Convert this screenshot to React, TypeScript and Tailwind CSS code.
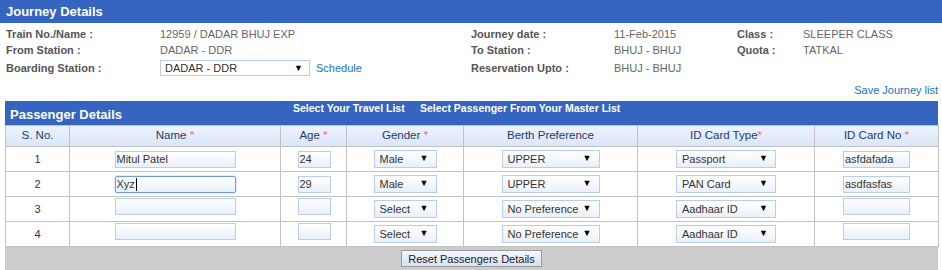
import React from "react";

const font = { fontFamily: '"Liberation Sans", Arial, sans-serif' };

function Field({ value, width, focus }: { value: string; width: string; focus?: boolean }) {
  return (
    <div
      className={`inline-flex h-[17px] items-center whitespace-nowrap ${width} bg-gradient-to-b from-white to-[#eaf0f9] px-[1px] text-left text-[11px] text-[#333] ${
        focus ? "rounded-[2px] border border-[#6f9be0] shadow-[0_0_2px_#9bbcf0]" : "border border-[#b9cdee]"
      }`}
    >
      {value}
      {focus && <span className="ml-[1px] inline-block h-[13px] w-[1px] bg-black" />}
    </div>
  );
}

function Dropdown({ value, width }: { value: string; width: string }) {
  return (
    <div
      className={`inline-flex h-[18px] items-center justify-between whitespace-nowrap ${width} border border-[#b9cdee] bg-gradient-to-b from-white to-[#eaf0f9] pl-[5px] pr-[7px] text-left text-[11px] text-[#333]`}
    >
      <span>{value}</span>
      <span className="text-[9px] text-black">▼</span>
    </div>
  );
}

type Passenger = {
  name: string;
  age: string;
  gender: string;
  berth: string;
  idType: string;
  idNo: string;
  focus?: boolean;
};

const passengers: Passenger[] = [
  { name: "Mitul Patel", age: "24", gender: "Male", berth: "UPPER", idType: "Passport", idNo: "asfdafada" },
  { name: "Xyz", age: "29", gender: "Male", berth: "UPPER", idType: "PAN Card", idNo: "asdfasfas", focus: true },
  { name: "", age: "", gender: "Select", berth: "No Preference", idType: "Aadhaar ID", idNo: "" },
  { name: "", age: "", gender: "Select", berth: "No Preference", idType: "Aadhaar ID", idNo: "" },
];

const Req = () => <span className="text-[#f06a8a]"> *</span>;

export default function App() {
  return (
    <div className="h-[270px] w-[942px] overflow-hidden bg-white" style={font}>
      {/* Journey header */}
      <div className="flex h-[23px] items-center bg-[#3565c0] pl-[6px] text-[13px] font-bold text-white">
        Journey Details
      </div>

      {/* Journey info */}
      <div className="grid grid-cols-[154px_311px_143px_123px_66px_1fr] pl-[6px] pt-[3px] text-[11px] leading-[16px]">
        <div className="font-bold text-[#555]">Train No./Name :</div>
        <div className="text-[#666]">12959 / DADAR BHUJ EXP</div>
        <div className="font-bold text-[#555]">Journey date :</div>
        <div className="text-[#666]">11-Feb-2015</div>
        <div className="font-bold text-[#555]">Class :</div>
        <div className="text-[#666]">SLEEPER CLASS</div>

        <div className="font-bold text-[#555]">From Station :</div>
        <div className="text-[#666]">DADAR - DDR</div>
        <div className="font-bold text-[#555]">To Station :</div>
        <div className="text-[#666]">BHUJ - BHUJ</div>
        <div className="font-bold text-[#555]">Quota :</div>
        <div className="text-[#666]">TATKAL</div>

        <div className="pt-[2px] font-bold text-[#555]">Boarding Station :</div>
        <div className="flex items-center gap-[6px] pt-[2px]">
          <div className="flex h-[16px] w-[150px] items-center justify-between border border-[#b9cdee] bg-white pl-[4px] pr-[6px] text-[11px] text-[#333]">
            <span>DADAR - DDR</span>
            <span className="text-[9px] text-black">▼</span>
          </div>
          <span className="text-[#1a73c8]">Schedule</span>
        </div>
        <div className="pt-[2px] font-bold text-[#555]">Reservation Upto :</div>
        <div className="pt-[2px] text-[#666]">BHUJ - BHUJ</div>
        <div />
        <div />
      </div>

      <div className="flex justify-end pr-[4px] pt-[7px] text-[11px] leading-[14px] text-[#1a73c8]">
        Save Journey list
      </div>

      {/* Passenger section */}
      <div className="ml-[5px] mt-[4px] w-[933px]">
        <div className="relative h-[24px] bg-[#3565c0]">
          <span className="absolute left-[5px] top-[4px] text-[13px] font-bold text-white">Passenger Details</span>
          <span className="absolute left-[288px] top-[0px] text-[10.5px] font-bold text-white">
            Select Your Travel List
          </span>
          <span className="absolute left-[415px] top-[0px] text-[10.5px] font-bold text-white">
            Select Passenger From Your Master List
          </span>
        </div>

        <table className="w-[933px] table-fixed border-collapse text-[11.5px]">
          <colgroup>
            <col className="w-[64px]" />
            <col className="w-[211px]" />
            <col className="w-[66px]" />
            <col className="w-[117px]" />
            <col className="w-[174px]" />
            <col className="w-[177px]" />
            <col className="w-[124px]" />
          </colgroup>
          <thead>
            <tr className="h-[21px] bg-gradient-to-b from-[#edf3fd] to-[#d9e6f8] text-[#1f3b6d]">
              <th className="border border-[#c2c2c2] p-0 font-normal">S. No.</th>
              <th className="border border-[#c2c2c2] p-0 font-normal">Name<Req /></th>
              <th className="border border-[#c2c2c2] p-0 font-normal">Age<Req /></th>
              <th className="border border-[#c2c2c2] p-0 font-normal">Gender<Req /></th>
              <th className="border border-[#c2c2c2] p-0 font-normal">Berth Preference</th>
              <th className="border border-[#c2c2c2] p-0 font-normal">
                ID Card Type<span className="text-[#f06a8a]">*</span>
              </th>
              <th className="border border-[#c2c2c2] p-0 font-normal">ID Card No<Req /></th>
            </tr>
          </thead>
          <tbody>
            {passengers.map((p, i) => (
              <tr key={i} className="h-[25px] text-center text-[11px] text-[#333]">
                <td className="border border-[#c2c2c2] p-0">{i + 1}</td>
                <td className="border border-[#c2c2c2] p-0">
                  <Field value={p.name} width="w-[121px]" focus={p.focus} />
                </td>
                <td className="border border-[#c2c2c2] p-0 pl-[1px]">
                  <Field value={p.age} width="w-[33px]" />
                </td>
                <td className="border border-[#c2c2c2] p-0">
                  <Dropdown value={p.gender} width="w-[63px]" />
                </td>
                <td className="border border-[#c2c2c2] p-0">
                  <Dropdown value={p.berth} width="w-[98px]" />
                </td>
                <td className="border border-[#c2c2c2] p-0">
                  <Dropdown value={p.idType} width="w-[100px]" />
                </td>
                <td className="border border-[#c2c2c2] p-0">
                  <Field value={p.idNo} width="w-[67px]" />
                </td>
              </tr>
            ))}
          </tbody>
        </table>

        <div className="flex h-[24px] justify-center bg-[#cccccc] pt-[3px]">
          <button className="h-[17px] w-[141px] border border-[#9a9a9a] bg-gradient-to-b from-[#f4f8fd] to-[#d5e2f3] text-[11px] leading-[14px] text-[#222]">
            Reset Passengers Details
          </button>
        </div>
      </div>
    </div>
  );
}
